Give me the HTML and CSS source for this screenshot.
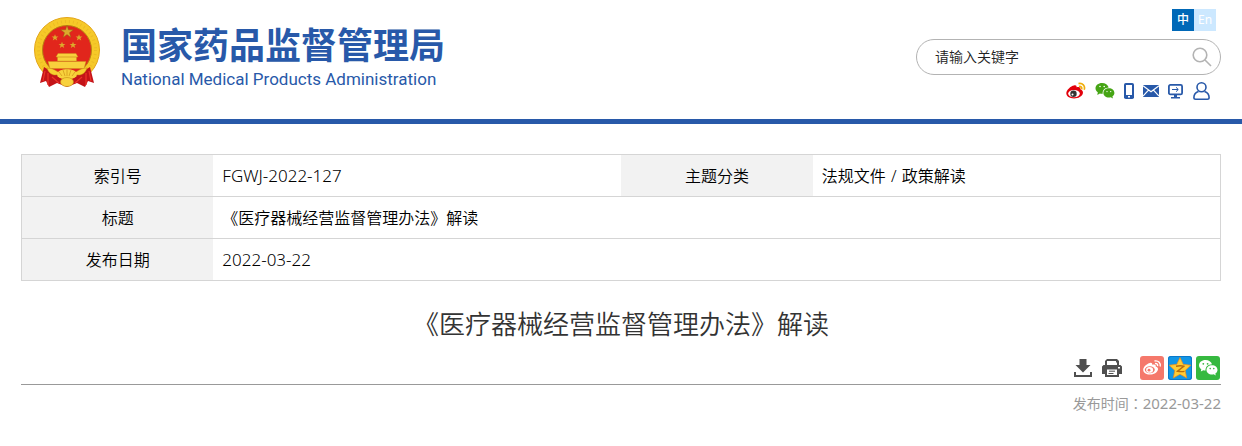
FILE: index.html
```html
<!DOCTYPE html>
<html lang="zh-CN">
<head>
<meta charset="utf-8">
<meta name="viewport" content="width=device-width, initial-scale=1">
<title>《医疗器械经营监督管理办法》解读</title>
<link rel="stylesheet" href="styles.css">
</head>
<body>
<header class="site-header">
  <div class="container header-inner">
    <a class="brand" href="#">
      <svg class="emblem" viewBox="0 0 66 71" aria-hidden="true">
        <circle cx="33" cy="33" r="32.500" fill="#f6c928" stroke="#e3a51a"/>
        <circle cx="33" cy="33" r="28.500" fill="none" stroke="#ecbb24" stroke-width="3" stroke-dasharray="1 3"/>
        <circle cx="33" cy="33" r="24.500" fill="#e1261c" stroke="#b98312"/>
        <path id="star" fill="#dca92c" stroke="#8a5a10" stroke-width=".4" d="M33 8.500l1.500 4.300h4.900l-3.900 2.900 1.400 4.700-3.900-2.800-3.900 2.800 1.400-4.700-3.900-2.900h4.900z"/>
        <g fill="#dca92c">
          <path id="small-star" d="M21 17.200l.9 2.300h2.500l-2 1.500.8 2.400-2.200-1.500-2.200 1.500.8-2.400-2-1.500h2.500z"/>
          <use href="#small-star" x="24"/><use href="#small-star" x="7" y="7.500"/><use href="#small-star" x="18" y="7.500"/>
        </g>
        <path fill="#f8d13c" stroke="#c98f18" stroke-width=".4" d="M24 36.500h18l2 3.500H22zM23.500 40h19v4h-19zM14 44.500h38l-2 7H16z"/>
        <path fill="#c31318" d="M10 50l8 5 15 1 15-1 8-5 4 16-6-2-3 6-8-4-10 4-10-4-8 4-3-6-6 2z"/>
        <path fill="none" stroke="#ee3328" stroke-width="1.200" d="M11 54l-2 10m5-8 0 12m4-8 7 6m30-12 2 10m-5-8 0 12m-4-8-7 6"/>
        <path fill="#f7cf31" stroke="#c58b12" stroke-width=".5" d="M13 51c6 0 9 3 13 5-4 4-11 2-13-5zM53 51c-6 0-9 3-13 5 4 4 11 2 13-5z"/>
        <ellipse cx="33" cy="57.500" rx="10" ry="5.500" fill="#f8d13c"/>
        <path fill="none" stroke="#d39a1a" stroke-width=".8" d="M33 52v7m-4-6 2 6m6-6-2 6m-10-4 3 4m13-4-3 4"/>
        <path fill="#c31318" d="M24 60c4 3 14 3 18 0l1 4H23z"/>
        <ellipse cx="33" cy="65" rx="6.500" ry="4.500" fill="#f8d13c" stroke="#c58b12" stroke-width=".6"/>
      </svg>
      <span class="brand-text">
        <span class="brand-cn">国家药品监督管理局</span>
        <span class="brand-en">National Medical Products Administration</span>
      </span>
    </a>
    <div class="tools">
      <nav class="languages" aria-label="语言">
        <a class="lang lang-active" href="#">中</a>
        <a class="lang" href="#">En</a>
      </nav>
      <form class="search">
        <input class="search-input" type="text" aria-label="请输入关键字" placeholder="请输入关键字">
        <button class="search-button" type="button" aria-label="搜索">
          <svg class="search-icon" viewBox="0 0 20 20" fill="none" stroke="#b3b3b3" stroke-width="1.600"><circle cx="8" cy="8" r="6.800"/><path d="M13 13l6 6"/></svg>
        </button>
      </form>
      <nav class="quick-links" aria-label="快捷入口">
        <a href="#" aria-label="微博"><svg width="20" height="18" viewBox="0 0 20 18"><path fill="#e2000b" d="M8 3.500c1.600-.6 2.900.1 2.600 1.800 2.200-.8 4.300-.2 3.800 2 2 .7 2.900 2.300 2.500 4-.8 3.300-4.600 5.200-8.800 5.200C3.400 16.500.3 14.300.3 11.300.3 8.200 4.700 4 8 3.500z"/><ellipse cx="8" cy="11.600" rx="5.800" ry="3.700" fill="#fff"/><circle cx="7.500" cy="11.700" r="3.200" fill="#333"/><circle cx="6.500" cy="12.600" r="1" fill="#fff"/><path d="M12.500 1.600c4-.9 7 2.400 5.700 6.100M13 4.500c2.100-.4 3.200 1 2.500 2.900" stroke="#f0ae0c" stroke-width="1.700" fill="none"/></svg></a>
        <a href="#" aria-label="微信"><svg width="20" height="18" viewBox="0 0 20 18"><g fill="#46a515"><path d="M7 1C3.300 1 .5 3.300.5 6.300c0 1.700.9 3.100 2.300 4L2.300 13l2.600-1.500c.7.200 1.400.3 2.100.3h.7C7.200 8 10 5.500 13.700 5.400 13 2.900 10.300 1 7 1z"/><path d="M13.900 6.300c-3.100 0-5.500 2-5.500 4.600s2.400 4.600 5.500 4.600c.6 0 1.200-.1 1.800-.2l2.300 1.300-.6-2.200c1.200-.9 2-2 2-3.500 0-2.600-2.400-4.600-5.500-4.600z"/></g><g fill="#fff"><circle cx="5" cy="4.500" r=".8"/><circle cx="9.200" cy="4.500" r=".8"/><circle cx="12" cy="9.600" r=".7"/><circle cx="15.700" cy="9.600" r=".7"/></g></svg></a>
        <a href="#" aria-label="移动端"><svg width="10" height="16" viewBox="0 0 10 16"><rect width="10" height="16" rx="1.800" fill="#2859a9"/><path fill="#fff" d="M2 2h6v10H2zM4 13h2v1.500H4z"/></svg></a>
        <a href="#" aria-label="邮箱"><svg width="16" height="12" viewBox="0 0 16 12"><path fill="#2859a9" d="M0 0h16v12H0z"/><path fill="none" stroke="#fff" stroke-width="1.200" d="M0 .8l8 6 8-6M0 11.200l5.500-6M16 11.200l-5.500-6"/></svg></a>
        <a class="screen-link" href="#" aria-label="电脑版"><svg width="15" height="15" viewBox="0 0 15 15"><rect x=".9" y=".9" width="13.200" height="9.500" rx="1.500" fill="none" stroke="#2859a9" stroke-width="1.800"/><path fill="#2859a9" d="M6 11h3v2h3v1.600H3V13h3z"/><path fill="none" stroke="#2859a9" d="M4 5.500h6M8 3.300l2.300 2.200L8 7.700"/></svg></a>
        <a href="#" aria-label="用户"><svg width="17" height="18" viewBox="0 0 17 18" fill="none" stroke="#2859a9" stroke-width="1.600"><circle cx="8.500" cy="5.300" r="4.500"/><path d="M5.500 9.600C2.700 10.600.9 12.900.9 15.500c0 1.200.5 1.700 1.700 1.700h11.800c1.200 0 1.700-.5 1.700-1.700 0-2.600-1.800-4.900-4.600-5.900"/></svg></a>
      </nav>
    </div>
  </div>
</header>
<main class="container">
  <table class="info">
    <tbody>
      <tr><th scope="row">索引号</th><td class="code">FGWJ-2022-127</td><th scope="row">主题分类</th><td>法规文件<span class="separator"> / </span>政策解读</td></tr>
      <tr><th scope="row">标题</th><td colspan="3">《医疗器械经营监督管理办法》解读</td></tr>
      <tr><th scope="row">发布日期</th><td class="code" colspan="3">2022-03-22</td></tr>
    </tbody>
  </table>
  <h1 class="title">《医疗器械经营监督管理办法》解读</h1>
  <div class="actions">
    <div class="page-actions">
      <button class="icon-button" type="button" aria-label="下载"><svg width="18" height="18" viewBox="0 0 18 18"><path fill="#4f4f4f" d="M5.500 0h7v6h4L9 13.500 1.500 6h4zM0 13h2v3h14v-3h2v5H0z"/></svg></button>
      <button class="icon-button" type="button" aria-label="打印"><svg width="20" height="18" viewBox="0 0 20 18"><path fill="#4f4f4f" d="M5 0h10l2 2v4h1.500L20 7.500V15h-3v3H3v-3H0V7.500L1.500 6H3V2z"/><path fill="#fff" d="M5 2h9v1.500h1V6H5zM5 10.500h10V16H5zM16 8h2v1.500h-2z"/><path stroke="#4f4f4f" d="M7 12.200h6M6.500 14.500h5"/></svg></button>
    </div>
    <div class="share">
      <a class="share-link share-weibo" href="#" aria-label="分享到微博"><svg width="24" height="24" viewBox="0 0 24 24"><path fill="#fff" d="M10 7c1.500-.5 2.500.2 2.200 1.800 2.200-.8 4-.3 3.500 1.700 1.700.5 2.600 1.600 2.300 3.100-.6 3-4.100 5-8.200 5-3.800 0-6.600-2-6.600-4.800C3.200 11 6.800 7.600 10 7z"/><ellipse cx="9.800" cy="13.800" rx="5" ry="3.500" fill="#f5786b"/><ellipse cx="9.600" cy="13.900" rx="3.500" ry="2.800" fill="#fff"/><circle cx="9" cy="14.200" r="1.400" fill="#f5786b"/><path d="M14.500 5c4-.8 6.500 2 5.700 5.500M15 7.600c1.900-.3 2.900.8 2.600 2.600" fill="none" stroke="#fff" stroke-width="1.400"/></svg></a>
      <a class="share-link share-qzone" href="#" aria-label="分享到QQ空间"><svg width="24" height="24" viewBox="0 0 24 24"><path fill="#ffcd36" stroke="#f08a1a" stroke-width=".7" stroke-linejoin="round" d="M12 1.500l3.200 6.800 7.600.9-5.600 5.200 1.500 7.600L12 18.200 5.300 22l1.500-7.600-5.600-5.200 7.600-.9z"/><path fill="none" stroke="#b96c0a" stroke-width="1.400" d="M8 10.200c3-.7 5.500-.7 7.800 0l-6.300 5c2.500.6 4.500.6 7 .2"/></svg></a>
      <a class="share-link share-wechat" href="#" aria-label="分享到微信"><svg width="24" height="24" viewBox="0 0 24 24"><g fill="#fff"><path d="M9.500 4C5.700 4 3 6.300 3 9.200c0 1.700.9 3.100 2.300 4L4.800 15.500l2.500-1.300c.7.200 1.400.3 2.200.3-.2-4 2.800-6.200 6.500-6.300C15.300 5.700 12.800 4 9.500 4z"/><path d="M16 9.300c-3.100 0-5.500 2-5.500 4.600s2.400 4.600 5.500 4.600c.6 0 1.200-.1 1.700-.2l2.100 1.200-.5-1.900c1.300-.9 2.200-2.200 2.200-3.700 0-2.600-2.400-4.600-5.500-4.600z"/></g><g fill="#36b940"><circle cx="7.300" cy="7.800" r=".9"/><circle cx="11.600" cy="7.800" r=".9"/><circle cx="14.200" cy="12.600" r=".8"/><circle cx="17.800" cy="12.600" r=".8"/></g></svg></a>
    </div>
  </div>
  <p class="published">发布时间<span class="colon" lang="zh-TW">：</span><time class="date" datetime="2022-03-22">2022-03-22</time></p>
</main>
</body>
</html>
```
FILE: styles.css
```css
* { box-sizing: border-box; }
body {
  margin: 0;
  background: #fff;
  color: #000;
  font-family: "Noto Sans", "Noto Sans CJK SC", sans-serif;
  font-size: 16px;
  font-weight: 350;
}
a { color: inherit; text-decoration: none; }
svg { display: block; }
.container { max-width: 1200px; margin: 0 auto; }
.site-header { border-bottom: 5px solid #2859a9; }
.header-inner {
  display: flex;
  justify-content: space-between;
  align-items: flex-start;
  padding-bottom: 19px;
}
.brand {
  display: flex;
  gap: 21px;
  padding: 17px 0 0 13px;
  color: #2859a9;
}
.emblem { width: 66px; height: 71px; }
.brand-text { display: flex; flex-direction: column; }
.brand-cn {
  font-family: "Noto Sans CJK SC", sans-serif;
  font-size: 36px;
  font-weight: 700;
  line-height: 52px;
}
.brand-en {
  font-family: Roboto, sans-serif;
  font-size: 17px;
  font-weight: 400;
  line-height: 20px;
}
.tools {
  display: flex;
  flex-direction: column;
  align-items: flex-end;
  width: 305px;
  padding-top: 9px;
}
.languages { display: flex; padding-right: 5px; }
.lang {
  width: 22px;
  height: 22px;
  background: #cce8ff;
  color: #fff;
  font-size: 12px;
  font-weight: 400;
  line-height: 22px;
  text-align: center;
}
.lang-active { background: #0068b7; font-weight: 500; }
.search {
  display: flex;
  align-items: center;
  width: 100%;
  height: 36px;
  margin-top: 8px;
  padding: 0 8px 0 18px;
  border: 1px solid #b3b3b3;
  border-radius: 18px;
}
.search-input {
  flex: 1;
  min-width: 0;
  padding: 0 0 2px;
  border: 0;
  outline: 0;
  background: none;
  font: inherit;
  font-size: 14px;
}
.search-input::placeholder { color: #222; opacity: 1; }
.search-button, .icon-button {
  padding: 0;
  border: 0;
  background: none;
  cursor: pointer;
}
.search-icon { width: 20px; height: 20px; }
.quick-links {
  display: flex;
  align-items: center;
  gap: 9px;
  height: 18px;
  margin-top: 7px;
  padding-right: 11px;
}
.screen-link { padding-right: 1px; }
.info {
  width: 100%;
  margin-top: 30px;
  border-collapse: collapse;
  border: 1px solid #d5d5d5;
  table-layout: fixed;
}
.info tr { border-bottom: 1px solid #d5d5d5; }
.info th, .info td {
  height: 42px;
  padding: 0 9px;
  font-weight: 350;
  line-height: 24px;
}
.info th { width: 16%; background: #f2f2f2; text-align: center; }
.info td { width: 34%; text-align: left; }
.info .code { font-size: 17px; }
.separator { padding: 0 1px; }
.title {
  margin: 23px 0 0;
  color: #333;
  font-size: 26px;
  font-weight: 350;
  line-height: 40px;
  text-align: center;
}
.actions {
  display: flex;
  justify-content: flex-end;
  align-items: center;
  gap: 18px;
  margin-top: 12px;
  padding: 0 1px 4px 0;
  border-bottom: 1px solid #999;
}
.page-actions { display: flex; gap: 10px; }
.share { display: flex; gap: 4px; }
.share-link { border-radius: 3px; overflow: hidden; }
.share-weibo { background: #f5786b; }
.share-qzone { background: #1296e6; box-shadow: inset 0 0 0 1px #0a78c8; }
.share-wechat { background: #36b940; }
.published {
  margin: 7px 0 0;
  color: #999;
  font-size: 14px;
  font-weight: 400;
  line-height: 22px;
  text-align: right;
}
.colon { font-family: "Noto Sans CJK TC", sans-serif; }
.date { font-size: 15px; }
```
